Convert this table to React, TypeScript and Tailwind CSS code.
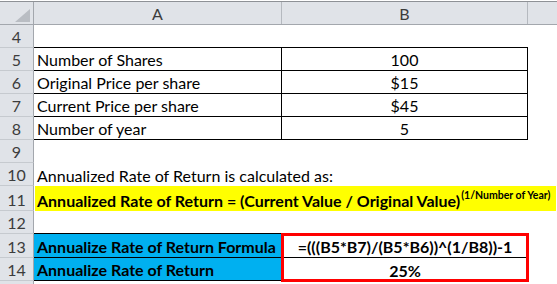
import React from 'react'

function Num({ n, h = 'h-[23px]' }: { n?: number; h?: string }) {
  return (
    <div
      className={`${h} w-[34px] shrink-0 flex items-end justify-center bg-[#e0e3e8] border-r border-b border-r-[#a3a7ad] border-b-[#c6cacf] text-[#3c3c3c] leading-[20px]`}
    >
      {n}
    </div>
  )
}

function Row({ n, h = 'h-[23px]', children }: { n?: number; h?: string; children?: React.ReactNode }) {
  return (
    <div className={`flex ${h}`}>
      <Num n={n} h={h} />
      {children}
    </div>
  )
}

const tableRows = [
  { n: 5, label: 'Number of Shares', value: '100' },
  { n: 6, label: 'Original Price per share', value: '$15' },
  { n: 7, label: 'Current Price per share', value: '$45' },
  { n: 8, label: 'Number of year', value: '5' },
]

export default function App() {
  return (
    <div className="w-[557px] h-[284px] overflow-hidden bg-white text-black text-[16px] leading-[20px] font-['Lato','Liberation_Sans',sans-serif]">
      <div className="h-px" />

      {/* column headers */}
      <div className="flex h-[24px] bg-[#e0e3e8] border-t border-b border-t-[#8e9196] border-b-[#a3a7ad] text-[#3c3c3c]">
        <div className="relative w-[34px] shrink-0 border-r border-[#a3a7ad]">
          <svg className="absolute right-[3px] bottom-[2px]" width="15" height="13" viewBox="0 0 15 13">
            <polygon points="15,0 15,13 0,13" fill="#b9bdc3" />
          </svg>
        </div>
        <div className="w-[248px] shrink-0 flex items-end justify-center border-r border-[#b5b9bf]">A</div>
        <div className="w-[246px] shrink-0 flex items-end justify-center border-r border-[#b5b9bf]">B</div>
        <div className="flex-1" />
      </div>

      <Row n={4}>
        <div className="w-[248px] shrink-0 border-b border-black" />
        <div className="w-[246px] shrink-0 border-b border-black" />
      </Row>

      {tableRows.map((r) => (
        <Row key={r.n} n={r.n}>
          <div className="w-[248px] shrink-0 flex items-end pl-[3px] border-b border-r border-black whitespace-nowrap">
            {r.label}
          </div>
          <div className="w-[246px] shrink-0 flex items-end justify-center border-b border-r border-black">
            {r.value}
          </div>
        </Row>
      ))}

      <Row n={9} />

      <Row n={10}>
        <div className="flex items-end pl-[3px] whitespace-nowrap">Annualized Rate of Return is calculated as:</div>
      </Row>

      <Row n={11} h="h-[25px]">
        <div className="ml-px w-[521px] shrink-0 flex items-end pl-[2px] bg-[#ffff00] font-bold whitespace-nowrap">
          <span>Annualized Rate of Return = (Current Value / Original Value)</span>
          <span className="self-start mt-[3px] ml-px text-[10.5px] leading-[12px]">(1/Number of Year)</span>
        </div>
      </Row>

      <Row n={12}>
        <div className="w-[248px] shrink-0 border-b border-black" />
        <div className="w-[246px] shrink-0 border-b border-black" />
      </Row>

      <div className="flex">
        <div className="flex flex-col">
          <Num n={13} h="h-[24px]" />
          <Num n={14} h="h-[23px]" />
        </div>
        <div className="w-[248px] shrink-0 flex flex-col bg-[#00b0f0] font-bold">
          <div className="h-[24px] flex items-end pl-[3px] border-b border-r border-black whitespace-nowrap">
            Annualize Rate of Return Formula
          </div>
          <div className="h-[23px] flex items-end pl-[3px] border-b border-r border-black">Annualize Rate of Return</div>
        </div>
        <div className="relative z-10 w-[246px] shrink-0 flex flex-col font-bold outline-3 outline-[#ff0000] -outline-offset-2">
          <div className="h-[24px] flex items-end justify-center border-b border-black">=(((B5*B7)/(B5*B6))^(1/B8))-1</div>
          <div className="h-[23px] flex items-end justify-center">25%</div>
        </div>
      </div>

      <Row />
    </div>
  )
}
